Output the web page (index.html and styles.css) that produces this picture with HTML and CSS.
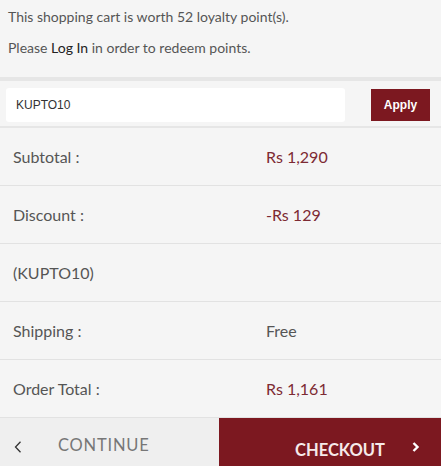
FILE: index.html
```html
<!DOCTYPE html>
<html>
<head>
    <title>Cart summary</title>
    <link rel="stylesheet" href="styles.css">
</head>
<body>
    <div class="loyalty">
        <p>This shopping cart is worth 52 loyalty point(s).</p>
        <p>Please <a href="#">Log In</a> in order to redeem points.</p>
    </div>

    <div class="coupon">
        <input type="text" class="coupon-input" value="KUPTO10">
        <button class="apply-btn">Apply</button>
    </div>

    <ul class="totals">
        <li><span class="label">Subtotal :</span><span class="value price">Rs 1,290</span></li>
        <li><span class="label">Discount :</span><span class="value price">-Rs 129</span></li>
        <li><span class="label">(KUPTO10)</span></li>
        <li><span class="label">Shipping :</span><span class="value">Free</span></li>
        <li><span class="label">Order Total :</span><span class="value price">Rs 1,161</span></li>
    </ul>

    <div class="cart-actions">
        <a href="#" class="continue-btn">
            <svg class="chev" width="8" height="12" viewBox="0 0 8 12"><path d="M6.5 0.8 L1.5 6 L6.5 11.2" fill="none" stroke="#333" stroke-width="1.3"/></svg>
            <span>CONTINUE</span>
        </a>
        <a href="#" class="checkout-btn">
            <span>CHECKOUT</span>
            <svg class="chev" width="8" height="10" viewBox="0 0 8 10"><path d="M1.5 1 L5.5 5 L1.5 9" fill="none" stroke="#fff" stroke-width="2.4"/></svg>
        </a>
    </div>
</body>
</html>
```

FILE: styles.css
```css
body {
    margin: 0;
    font-family: Lato, "Open Sans", sans-serif;
    background-color: #f5f5f5;
    color: #555;
    height: 466px;
    overflow: hidden;
}
.loyalty {
    padding: 7px 8px 8px;
    font-size: 14px;
    color: #555;
}
.loyalty p {
    margin: 0 0 12px;
    line-height: 19px;
}
.loyalty a {
    color: #222;
    text-decoration: none;
}
.coupon {
    display: flex;
    align-items: center;
    justify-content: space-between;
    padding: 7px 11px 4px 6px;
    border-top: 4px solid #e6e6e6;
    border-bottom: 2px solid #e6e6e6;
}
.coupon-input {
    width: 339px;
    height: 34px;
    box-sizing: border-box;
    border: none;
    border-radius: 3px;
    background-color: #fff;
    padding: 0 10px;
    font-family: "Liberation Sans", Arial, sans-serif;
    font-size: 12px;
    color: #333;
}
.apply-btn {
    width: 59px;
    height: 32px;
    border: none;
    background-color: #7c1820;
    color: #fff;
    font-family: "Liberation Sans", Arial, sans-serif;
    font-size: 12px;
    font-weight: bold;
    cursor: pointer;
}
.totals {
    list-style: none;
    margin: 0;
    padding: 0;
}
.totals li {
    display: flex;
    align-items: center;
    height: 57px;
    padding-left: 13px;
    border-bottom: 1px solid #e2e2e2;
    font-size: 16px;
}
.totals .label {
    width: 253px;
}
.totals .price {
    color: #7d2a33;
}
.cart-actions {
    display: flex;
    height: 48px;
}
.continue-btn {
    width: 219px;
    display: flex;
    align-items: center;
    padding: 6px 0 0 14px;
    box-sizing: border-box;
    background-color: #efefef;
    color: #777;
    text-decoration: none;
    font-size: 16.5px;
    letter-spacing: 0.8px;
}
.continue-btn .chev {
    margin-right: 36px;
    margin-top: 4px;
}
.checkout-btn {
    flex: 1;
    display: flex;
    align-items: center;
    justify-content: flex-end;
    padding: 16px 21px 0 0;
    background-color: #7c1820;
    color: #f6eaea;
    text-decoration: none;
    font-size: 16.5px;
    font-weight: bold;
}
.checkout-btn .chev {
    margin-left: 27px;
    margin-bottom: 6px;
}
```
